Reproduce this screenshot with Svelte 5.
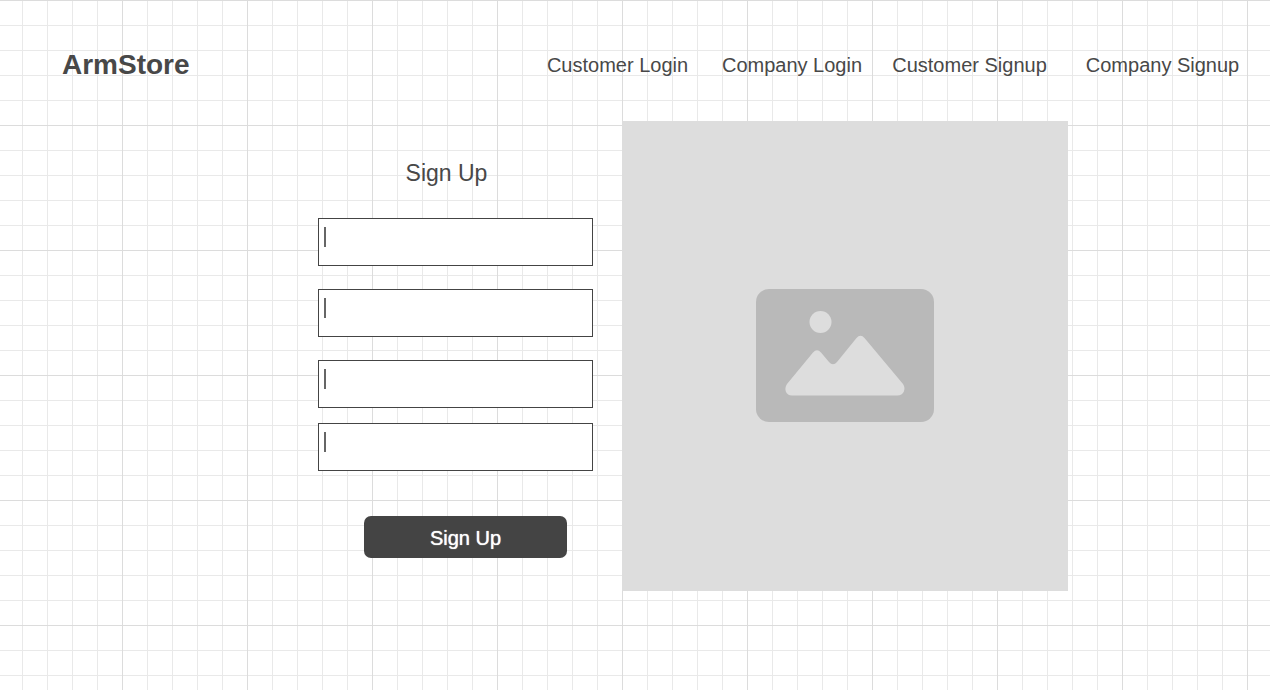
<script>
  const links = ['Customer Login', 'Company Login', 'Customer Signup', 'Company Signup'];
  const fields = ['Name', 'Email', 'Password', 'Confirm password'];
</script>

<div class="page">
  <header>
    <a class="brand" href="#home">ArmStore</a>
    <nav>
      {#each links as link}
        <a href="#{link.toLowerCase().replace(' ', '-')}">{link}</a>
      {/each}
    </nav>
  </header>

  <main>
    <form onsubmit={(event) => event.preventDefault()}>
      <h1>Sign Up</h1>
      <div class="fields">
        {#each fields as field}
          <input type="text" aria-label={field} />
        {/each}
      </div>
      <button type="submit">Sign Up</button>
    </form>

    <div class="picture">
      <svg width="178" height="134" viewBox="0 0 178 134" aria-hidden="true">
        <rect width="178" height="133" rx="13" fill="#b9b9b9" />
        <circle cx="64.5" cy="33" r="11" fill="#ddd" />
        <path
          fill="#ddd"
          d="M31 95 L57 63.500 Q61 59 65 63.500 L73 73 Q77 77.500 81 73 L100.500 49 Q104.500 44.500 108.500 49 L147 95 C150.500 100 147.500 106.500 141.500 106.500 H36 C30 106.500 27.500 100 31 95 Z"
        />
      </svg>
    </div>
  </main>
</div>

<style>
  :global(body) {
    margin: 0;
    font-family: 'Liberation Sans', Arial, sans-serif;
    color: #484848;
  }

  .page {
    box-sizing: border-box;
    min-height: 100vh;
    padding-bottom: 48px;
    background-color: #fff;
    background-image:
      linear-gradient(to right, #dcdcdc 1px, transparent 1px),
      linear-gradient(to bottom, #dcdcdc 1px, transparent 1px),
      linear-gradient(to right, #e9e9e9 1px, transparent 1px),
      linear-gradient(to bottom, #e9e9e9 1px, transparent 1px);
    background-size: 125px 125px, 125px 125px, 25px 25px, 25px 25px;
    background-position: 122px 0, 0 0, 22px 0, 0 0;
  }

  header {
    display: flex;
    align-items: center;
    justify-content: space-between;
    padding: 49px 7px 40px 62px;
  }

  a {
    color: inherit;
    text-decoration: none;
  }

  .brand {
    font-size: 28px;
    font-weight: 700;
    line-height: 32px;
  }

  nav {
    display: grid;
    grid-template-columns: 179px 170px 185px 201px;
    font-size: 20px;
    line-height: 32px;
    text-align: center;
    white-space: nowrap;
  }

  main {
    display: grid;
    grid-template-columns: 275fr 446fr;
    gap: 29px;
    padding: 0 202px 0 318px;
  }

  form {
    display: flex;
    flex-direction: column;
    padding-top: 36px;
  }

  h1 {
    margin: 0 18px 29px 0;
    font-size: 23px;
    font-weight: 400;
    line-height: 32px;
    text-align: center;
  }

  .fields {
    display: grid;
    gap: 23px;
  }

  input {
    box-sizing: border-box;
    width: 100%;
    height: 48px;
    padding: 6px 9px;
    border: 1px solid #444;
    border-radius: 0;
    background: linear-gradient(#666, #666) 5px 8px / 2px 20px no-repeat #fff;
    font: inherit;
    font-size: 20px;
    color: #444;
  }

  input:last-child {
    margin-top: -8px;
  }

  button {
    margin: 45px 26px 0 46px;
    height: 42px;
    padding: 2px 0 0;
    border: 0;
    border-radius: 7px;
    background: #444;
    font: inherit;
    font-size: 20px;
    color: #fff;
    text-shadow: 0 0 1px #fff;
  }

  .picture {
    display: grid;
    place-items: center;
    min-height: 470px;
    background: #ddd;
  }
</style>
